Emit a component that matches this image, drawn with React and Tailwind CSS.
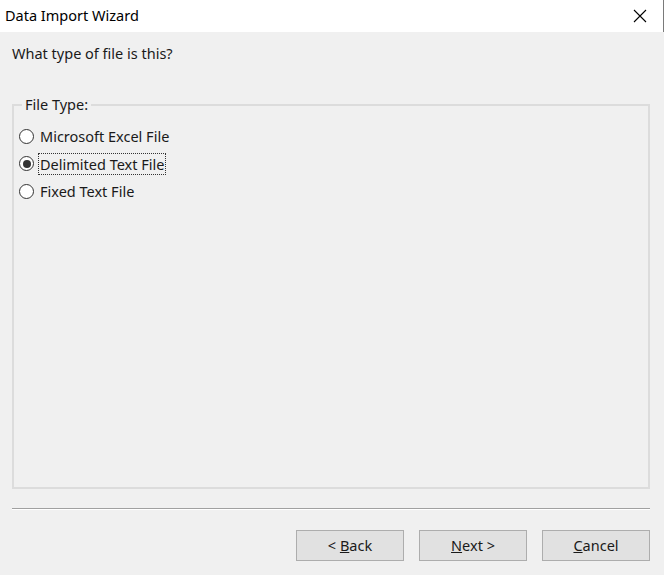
import { useState } from 'react';

const options = ['Microsoft Excel File', 'Delimited Text File', 'Fixed Text File'];

const Radio = ({ checked }) => (
  <span className="w-[15px] h-[15px] rounded-full border border-[#333333] bg-white flex items-center justify-center shrink-0">
    {checked && <span className="w-[8px] h-[8px] rounded-full bg-[#333333]" />}
  </span>
);

const Button = ({ children }) => (
  <button className="w-[108px] h-[31px] border border-[#adadad] bg-[#e1e1e1] text-[14.5px] text-[#1a1a1a] flex items-center justify-center">
    <span>{children}</span>
  </button>
);

export default function App() {
  const [selected, setSelected] = useState(1);

  return (
    <div
      className="w-[664px] h-[575px] bg-[#f0f0f0] flex flex-col text-[#1a1a1a]"
      style={{ fontFamily: '"Noto Sans", "Open Sans", sans-serif' }}
    >
      {/* title bar */}
      <div className="h-[32px] bg-white flex items-center border-r border-[#7a7a7a]">
        <span className="pl-[5px] text-[14.5px] text-black flex-1">Data Import Wizard</span>
        <svg width="14" height="14" viewBox="0 0 14 14" className="mr-[16px]">
          <path d="M1 1 L13 13 M13 1 L1 13" stroke="#000" strokeWidth="1.1" />
        </svg>
      </div>

      <div className="flex-1 flex flex-col px-[12px] pr-[14px]">
        <p className="text-[14.5px] mt-[10px] leading-[22px]">What type of file is this?</p>

        {/* group box */}
        <div className="relative mt-[40px] h-[385px] border-2 border-[#dcdcdc]">
          <span className="absolute -top-[12px] left-[8px] px-[3px] bg-[#f0f0f0] text-[14.5px] leading-[20px]">
            File Type:
          </span>
          <div className="flex flex-col gap-[5.5px] pt-[19px] pl-[5px]">
            {options.map((o, i) => (
              <label
                key={o}
                onClick={() => setSelected(i)}
                className="flex items-center gap-[4px] h-[22px] cursor-default"
              >
                <Radio checked={selected === i} />
                <span
                  className={`text-[14.5px] leading-[20px] px-[1px] border border-dotted ${
                    selected === i ? 'border-[#333333]' : 'border-transparent'
                  }`}
                >
                  {o}
                </span>
              </label>
            ))}
          </div>
        </div>

        {/* separator */}
        <div className="mt-[19px] h-[2px] border-t border-[#a0a0a0] border-b border-b-white" />

        <div className="mt-[20px] flex justify-end gap-[15px]">
          <Button>&lt; <span className="underline">B</span>ack</Button>
          <Button><span className="underline">N</span>ext &gt;</Button>
          <Button><span className="underline">C</span>ancel</Button>
        </div>
      </div>
    </div>
  );
}
